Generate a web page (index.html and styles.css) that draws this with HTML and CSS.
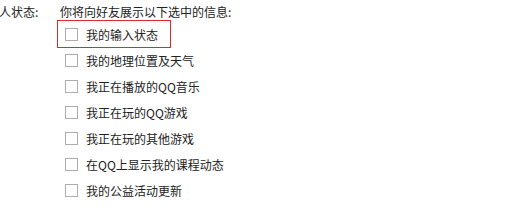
FILE: index.html
```html
<!DOCTYPE html>
<html lang="zh-CN">
<head>
    <meta charset="UTF-8">
    <title>个人状态</title>
    <link rel="stylesheet" href="styles.css">
</head>

<body>
    <div class="setting-row">
        <div class="setting-label">个人状态:</div>

        <div class="setting-body">
            <div class="setting-title">你将向好友展示以下选中的信息:</div>

            <!-- 状态选项 -->
            <ul class="option-list">
                <li><label class="option focused"><input type="checkbox"><span>我的输入状态</span></label></li>
                <li><label class="option"><input type="checkbox"><span>我的地理位置及天气</span></label></li>
                <li><label class="option"><input type="checkbox"><span>我正在播放的QQ音乐</span></label></li>
                <li><label class="option"><input type="checkbox"><span>我正在玩的QQ游戏</span></label></li>
                <li><label class="option"><input type="checkbox"><span>我正在玩的其他游戏</span></label></li>
                <li><label class="option"><input type="checkbox"><span>在QQ上显示我的课程动态</span></label></li>
                <li><label class="option"><input type="checkbox"><span>我的公益活动更新</span></label></li>
            </ul>
        </div>
    </div>
</body>
</html>
```

FILE: styles.css
```css
body {
    margin: 0;
    background-color: #fff;
    color: #222;
    font-family: "Noto Sans CJK SC", "Noto Sans", sans-serif;
    font-size: 12px;
    overflow: hidden;
}

.setting-row {
    display: flex;
    margin-left: -13px;
}

.setting-label {
    width: 71px;
    padding-top: 3px;
    line-height: 18px;
}

.setting-title {
    padding: 3px 0 0 2px;
    line-height: 18px;
}

.option-list {
    list-style: none;
    margin: 0;
    padding: 0;
}

.option {
    display: inline-flex;
    align-items: center;
    gap: 8px;
    height: 26px;
    padding: 0 12px 0 7px;
}

.option.focused {
    outline: 1px solid #e0282e;
}

.option input {
    appearance: none;
    width: 13px;
    height: 13px;
    margin: 0;
    border: 1px solid #adadad;
    background-color: #fff;
}
```
